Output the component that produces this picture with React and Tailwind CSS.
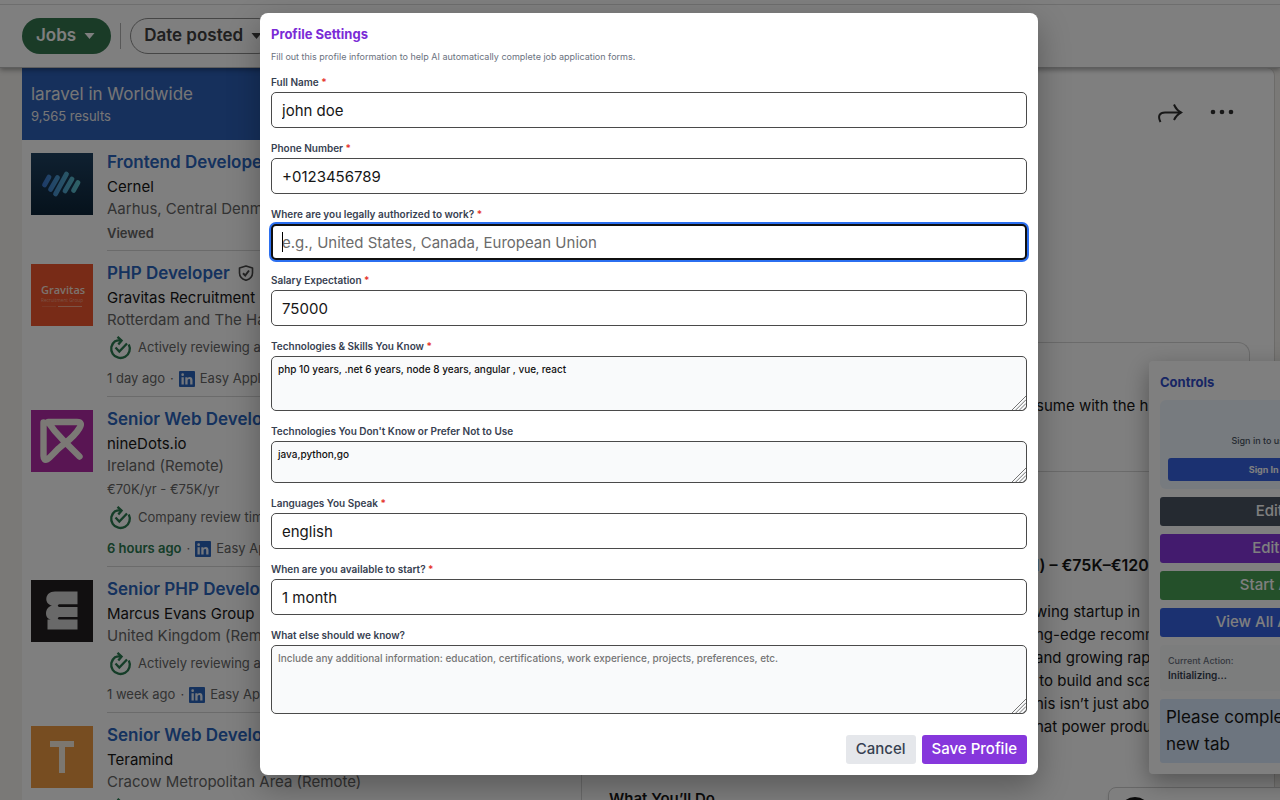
import React, { useState } from "react";

const jobs = [
  {
    title: "Frontend Developer",
    company: "Cernel",
    location: "Aarhus, Central Denmark",
    viewed: true,
    logo: "cernel",
  },
  {
    title: "PHP Developer",
    verified: true,
    company: "Gravitas Recruitment",
    location: "Rotterdam and The Hague",
    review: "Actively reviewing ads",
    posted: "1 day ago",
    logo: "gravitas",
  },
  {
    title: "Senior Web Developer",
    company: "nineDots.io",
    location: "Ireland (Remote)",
    salary: "€70K/yr - €75K/yr",
    review: "Company review time",
    posted: "6 hours ago",
    fresh: true,
    logo: "ninedots",
  },
  {
    title: "Senior PHP Developer",
    company: "Marcus Evans Group",
    location: "United Kingdom (Remote)",
    review: "Actively reviewing ads",
    posted: "1 week ago",
    logo: "marcus",
  },
  {
    title: "Senior Web Developer",
    company: "Teramind",
    location: "Cracow Metropolitan Area (Remote)",
    review: "",
    reviewIcon: true,
    logo: "teramind",
  },
];

const fields = [
  { id: "fullName", label: "Full Name", required: true },
  { id: "phone", label: "Phone Number", required: true },
  {
    id: "authorized",
    label: "Where are you legally authorized to work?",
    required: true,
    active: true,
    placeholder: "e.g., United States, Canada, European Union",
  },
  { id: "salary", label: "Salary Expectation", required: true },
  {
    id: "skills",
    label: "Technologies & Skills You Know",
    required: true,
    area: "h-[55px]",
  },
  {
    id: "avoid",
    label: "Technologies You Don't Know or Prefer Not to Use",
    area: "h-[42px]",
  },
  { id: "languages", label: "Languages You Speak", required: true },
  { id: "start", label: "When are you available to start?", required: true },
  {
    id: "extra",
    label: "What else should we know?",
    area: "h-[69px]",
    placeholder:
      "Include any additional information: education, certifications, work experience, projects, preferences, etc.",
  },
];

const Logo = ({ name }) => {
  if (name === "cernel") {
    return (
      <svg viewBox="0 0 62 62" className="size-[62px] shrink-0">
        <defs>
          <linearGradient id="cernelBg" x1="0" y1="0" x2="0" y2="1">
            <stop offset="0" stopColor="#1f4262" />
            <stop offset="1" stopColor="#0c2438" />
          </linearGradient>
          <linearGradient
            id="cernelBars"
            gradientUnits="userSpaceOnUse"
            x1="12"
            y1="0"
            x2="50"
            y2="0"
          >
            <stop offset="0" stopColor="#3c78d0" />
            <stop offset="1" stopColor="#5fc8cc" />
          </linearGradient>
        </defs>
        <rect width="62" height="62" fill="url(#cernelBg)" />
        <path
          d="M13.5 32L18 24M19.5 36.5L26.5 24.5M24.5 41L35.5 21M34 38L41 26M42.5 37.5L47 29.5"
          stroke="url(#cernelBars)"
          strokeWidth="4.8"
          strokeLinecap="round"
        />
      </svg>
    );
  }
  if (name === "gravitas") {
    return (
      <svg viewBox="0 0 62 62" className="size-[62px] shrink-0">
        <rect width="62" height="62" fill="#f0562e" />
        <g fontFamily="'Open Sans', sans-serif">
          <text x="10" y="30" fontSize="11" fontWeight="600" fill="#f8e4dc">
            Gravitas
          </text>
          <text x="10" y="38" fontSize="4.7" fill="#f8a58a">
            Recruitment Group
          </text>
        </g>
        <path d="M11 42.5H25" stroke="#f68b6a" strokeWidth="0.5" />
        <path d="M27 42.5H51" stroke="#f9a88e" strokeWidth="1" />
      </svg>
    );
  }
  if (name === "ninedots") {
    return (
      <svg viewBox="0 0 62 62" className="size-[62px] shrink-0">
        <rect width="62" height="62" fill="#b32aa6" />
        <path
          d="M48.5 46.5L32 30Q23 21 17 12H46C50 12 51 14 48.5 18C42 29 32 34 26 40C22 44 20 47 16 49.5C14 50.5 12.5 49 12.5 46V12.5"
          fill="none"
          stroke="#f6f2ea"
          strokeWidth="6.4"
          strokeLinecap="round"
          strokeLinejoin="round"
        />
      </svg>
    );
  }
  if (name === "marcus") {
    return (
      <svg viewBox="0 0 62 62" className="size-[62px] shrink-0">
        <rect width="62" height="62" fill="#231f20" />
        <path
          d="M46.5 11.5H24C13 11.5 13 24.5 21 25.5C13 27.5 13.5 39 20 39.5H16.5V49.5H46.5V39.5H28Q25.5 38.3 28 37H46.5V27H28Q25.5 25.5 28 24.2H46.5Z"
          fill="#d2d2d2"
        />
      </svg>
    );
  }
  return (
    <svg viewBox="0 0 62 62" className="size-[62px] shrink-0">
      <rect width="62" height="62" fill="#ee9a42" />
      <path d="M19 15H43V21H34V47H28V21H19Z" fill="#f8eee0" />
    </svg>
  );
};

const ReviewIcon = () => (
  <svg
    viewBox="0 0 24 24"
    className="ml-px size-6 shrink-0"
    fill="none"
    stroke="#2a7a50"
    strokeWidth="2.3"
  >
    <path d="M20.8 8.5A9.300 9.300 0 1 1 7 5.2C9 4.3 11 4.2 13.5 4.6" />
    <path d="M9.5 0.8L13.6 4.6L10.3 8.6" />
    <path d="M7.5 11.5L11.3 15.5L19 7.5" />
  </svg>
);

const LinkedInMark = () => (
  <svg viewBox="0 0 16 16" className="size-4 shrink-0">
    <rect width="16" height="16" rx="1" fill="#2a64bc" />
    <path
      d="M2.5 6.2H4.8V13.4H2.5ZM6.3 6.2H8.5V7.2C9 6.4 9.8 6 10.8 6C12.9 6 13.5 7.4 13.5 9.3V13.4H11.2V9.7C11.2 8.7 11 8 10.1 8C9 8 8.6 8.8 8.6 9.7V13.4H6.3Z"
      fill="#e8eef8"
    />
    <circle cx="3.65" cy="3.7" r="1.35" fill="#e8eef8" />
  </svg>
);

const VerifiedIcon = () => (
  <svg
    viewBox="0 0 16 16"
    className="ml-[2px] size-4"
    fill="none"
    stroke="#4a4a4a"
    strokeWidth="1.6"
  >
    <path
      d="M8 1L14.5 3V8C14.5 11.5 12 14 8 15.3C4 14 1.5 11.5 1.5 8V3Z"
      strokeLinejoin="round"
    />
    <path d="M5 8.3L7.2 10.5L11 5.5" strokeWidth="2" />
  </svg>
);

const JobItem = ({ job }) => (
  <li className="flex gap-[14px] pl-[9px]">
    <div className="pt-[13px]">
      <Logo name={job.logo} />
    </div>
    <div className="min-w-0 grow border-b border-[#d6d6d6] pt-[10px] whitespace-nowrap">
      <div className="mb-[2px] flex items-center gap-[6px] leading-6">
        <a href="#job" className="text-[17px] font-semibold text-[#2a64bc]">
          {job.title}
        </a>
        {job.verified && <VerifiedIcon />}
      </div>
      <p className="text-[15px] leading-[22px] text-[#161616]">{job.company}</p>
      <p className="text-[15px] leading-[22px] text-[#666666]">{job.location}</p>
      {job.viewed && (
        <p className="h-[30px] text-[13px] leading-[26px] font-semibold text-[#666666]">
          Viewed
        </p>
      )}
      {job.salary && (
        <p className="text-[13px] leading-6 text-[#666666]">{job.salary}</p>
      )}
      {(job.review || job.reviewIcon) && (
        <div className="mt-[3px] flex h-7 items-center gap-[6px] text-[13px] text-[#666666]">
          <ReviewIcon />
          {job.review}
        </div>
      )}
      {job.posted && (
        <div className="flex h-[34px] items-center gap-[5px] text-[13px] text-[#666666]">
          <span className={job.fresh ? "font-semibold text-[#2a7a50]" : ""}>
            {job.posted}
          </span>
          <span>·</span>
          <LinkedInMark />
          <span>Easy Apply</span>
        </div>
      )}
    </div>
  </li>
);

const FilterBar = () => (
  <header className="relative z-10 border-b border-[#bdbdbd] bg-white shadow-[0_2px_5px_rgba(0,0,0,0.35)]">
    <div className="h-[5px] border-b border-[#dcdcdc]"></div>
    <div className="flex h-[62px] items-center gap-[9px] pl-[22px]">
      <button className="flex h-9 items-center gap-2 rounded-full bg-[#34764f] pr-4 pl-[14px] text-[17px] font-semibold text-white">
        Jobs
        <svg viewBox="0 0 10 6" className="h-[6px] w-[11px]">
          <path d="M0 0H10L5 6Z" fill="white" />
        </svg>
      </button>
      <div className="h-[26px] w-px bg-[#b0b0b0]"></div>
      <button className="flex h-9 items-center gap-2 rounded-full border border-[#8c8c8c] px-[13px] text-[17px] font-semibold text-[#404040]">
        Date posted
        <svg viewBox="0 0 10 6" className="h-[6px] w-[11px]">
          <path d="M0 0H10L5 6Z" fill="#404040" />
        </svg>
      </button>
    </div>
  </header>
);

const JobDetails = () => (
  <section className="relative mr-[5px] min-w-0 grow overflow-hidden rounded-tr-lg border-r border-[#d8d6d2] bg-white whitespace-nowrap">
    <div className="flex h-[274px] items-start justify-end gap-[26px] pt-8 pr-[39px]">
      <button aria-label="Share">
        <svg
          viewBox="0 0 26 24"
          className="h-6 w-[26px]"
          fill="none"
          stroke="#303030"
          strokeWidth="2"
        >
          <path d="M3.5 22C0.5 16 2.5 12.5 8 12.5H24" />
          <path d="M17 4.5C18.5 8 21 11 24 12.5C21 14 18.5 17 17 20" />
        </svg>
      </button>
      <button aria-label="More options">
        <svg viewBox="0 0 26 24" className="h-6 w-[26px]" fill="#303030">
          <circle cx="4" cy="12" r="2.3" />
          <circle cx="13" cy="12" r="2.3" />
          <circle cx="22" cy="12" r="2.3" />
        </svg>
      </button>
    </div>
    <div className="mr-6 ml-[27px] h-[129px] rounded-t-xl border border-b-0 border-[#d6d6d6] pt-[51px] pl-[426px] text-[15px] leading-6 text-[#161616]">
      sume with the hiring
    </div>
    <div className="border-t border-[#d6d6d6] pt-[81px] pl-[453px] text-[15px] text-[#161616]">
      <h2 className="text-base leading-6 font-semibold">l) – €75K–€120K</h2>
      <p className="mt-[23px] leading-[23px]">
        wing startup in
        <br />
        ng-edge recommend
        <br />
        and growing rapidly
        <br />
        &nbsp;to build and scale
        <br />
        his isn’t just about
        <br />
        hat power products
      </p>
    </div>
    <h2 className="mt-[49px] ml-[27px] text-[15px] leading-6 font-semibold text-[#161616]">
      What You’ll Do
    </h2>
  </section>
);

const ControlsPanel = () => (
  <aside className="absolute top-[361px] -right-[153px] z-20 flex w-[284px] flex-col rounded bg-white p-[11px] whitespace-nowrap shadow-[0_8px_24px_rgba(0,0,0,0.35)]">
    <h2 className="mb-2 text-[13px] leading-5 font-bold text-[#304cc8]">Controls</h2>
    <div className="mb-2 rounded-md bg-[#eff6ff] px-2 pt-8 pb-2 text-center">
      <p className="mb-2 text-[9px] leading-[18px] font-medium text-[#4b5563]">
        Sign in to use all AI features
      </p>
      <button className="block h-[23px] w-full rounded-[3px] bg-[#3762e3] text-[9px] font-bold text-white">
        Sign In with Google
      </button>
    </div>
    <div className="flex flex-col gap-2 text-[15px] font-medium text-white">
      <button className="h-[29px] rounded-[3px] bg-[#4b5563]">Edit Rules</button>
      <button className="h-[29px] rounded-[3px] bg-[#8637dc]">Edit Profile</button>
      <button className="h-[29px] rounded-[3px] bg-[#48a054]">Start Applying</button>
      <button className="h-[29px] rounded-[3px] bg-[#3762e3]">
        View All Applications
      </button>
    </div>
    <div className="mt-2 h-[46px] rounded-sm bg-[#f9fafb] px-2 pt-[9px] text-[9px] leading-[14px]">
      <p className="font-medium text-[#6b7280]">Current Action:</p>
      <p className="text-[10px] font-semibold text-[#374151]">Initializing...</p>
    </div>
    <p className="mt-2 rounded-[3px] bg-[#dbeafe] px-[6px] py-[5px] text-[17px] leading-[27px] text-[#161616]">
      Please complete sign in
      <br />
      new tab
    </p>
  </aside>
);

const ResizeGrip = () => (
  <svg
    viewBox="0 0 15 15"
    className="pointer-events-none absolute right-px bottom-px size-[14px]"
    stroke="#6b6b6b"
    strokeWidth="1"
  >
    <path d="M0 15L15 0M4 15L15 4M8 15L15 8M12 15L15 12" />
  </svg>
);

const Field = ({ field, value, onChange }) => (
  <div>
    <label
      htmlFor={field.id}
      className="block pb-[3px] text-[10px] leading-[13px] font-semibold text-[#374151]"
    >
      {field.label}
      {field.required && <span className="text-[#e5352d]"> *</span>}
    </label>
    <div className="relative">
      {field.area ? (
        <>
          <textarea
            id={field.id}
            value={value}
            placeholder={field.placeholder}
            onChange={onChange}
            className={`block w-full resize-none rounded-[5px] border border-[#4a4a4a] bg-[#f9fafb] px-[6px] py-1 text-[10px] leading-4 font-medium text-[#111111] placeholder:text-[#757575] ${field.area}`}
          ></textarea>
          <ResizeGrip />
        </>
      ) : (
        <input
          id={field.id}
          type="text"
          value={value}
          placeholder={field.placeholder}
          onChange={onChange}
          className={
            field.active
              ? "block h-9 w-full rounded-[5px] border-2 border-[#101010] bg-white px-[9px] text-[15px] text-[#161616] ring-2 ring-[#2b6ff0] outline-none placeholder:text-[#6b6b6b]"
              : "block h-9 w-full rounded-[5px] border border-[#4a4a4a] bg-white px-[10px] text-[15px] text-[#161616]"
          }
        />
      )}
      {field.active && (
        <span className="absolute top-2 left-[11px] h-5 w-px bg-black"></span>
      )}
    </div>
  </div>
);

const ProfileModal = () => {
  const [profile, setProfile] = useState({
    fullName: "john doe",
    phone: "+0123456789",
    authorized: "",
    salary: "75000",
    skills: "php 10 years, .net 6 years, node 8 years, angular , vue, react",
    avoid: "java,python,go",
    languages: "english",
    start: "1 month",
    extra: "",
  });

  return (
    <div className="absolute inset-0 z-30 flex items-start justify-center bg-black/50 pt-[13px] pl-[18px]">
      <form
        className="w-[778px] max-w-full rounded-lg bg-white p-[11px] shadow-[0_12px_32px_rgba(0,0,0,0.3)]"
        onSubmit={(e) => e.preventDefault()}
      >
        <h1 className="text-[13px] leading-5 font-bold text-[#7a2bd6]">Profile Settings</h1>
        <p className="mt-[5px] mb-[11px] text-[9px] leading-4 text-[#6b7280]">
          Fill out this profile information to help AI automatically complete job application forms.
        </p>
        <div className="flex flex-col gap-[14px]">
          {fields.map((field) => (
            <Field
              key={field.id}
              field={field}
              value={profile[field.id]}
              onChange={(e) =>
                setProfile({ ...profile, [field.id]: e.target.value })
              }
            />
          ))}
        </div>
        <div className="mt-[21px] flex justify-end gap-[6px] text-[15px] font-medium">
          <button
            type="button"
            className="h-[29px] rounded-[3px] bg-[#e5e7eb] px-[10px] text-[#374151]"
          >
            Cancel
          </button>
          <button
            type="submit"
            className="h-[29px] rounded-[3px] bg-[#8637dc] px-[10px] text-white"
          >
            Save Profile
          </button>
        </div>
      </form>
    </div>
  );
};

const App = () => {
  return (
    <div className="relative flex h-screen flex-col overflow-hidden bg-[#f4f2ee] font-['Inter','Liberation_Sans',sans-serif]">
      <FilterBar />
      <main className="flex min-h-0 grow pl-[22px]">
        <section className="w-[560px] shrink-0 overflow-hidden border-r border-[#d6d6d6] bg-white">
          <div className="h-[72px] bg-[#2c60b8] px-[9px] pt-[14px] text-[#ececec]">
            <h1 className="text-[17px] leading-6">laravel in Worldwide</h1>
            <p className="text-[13px] leading-5">9,565 results</p>
          </div>
          <ul>
            {jobs.map((job, index) => (
              <JobItem key={index} job={job} />
            ))}
          </ul>
        </section>
        <JobDetails />
      </main>
      <ControlsPanel />
      <div className="absolute -right-20 -bottom-8 z-10 flex h-[45px] w-[252px] items-center rounded-lg border border-[#cfcfcf] bg-white px-[10px] shadow-md">
        <div className="mt-[6px] size-8 rounded-full bg-[#161616]"></div>
      </div>
      <ProfileModal />
    </div>
  );
};

export default App;
